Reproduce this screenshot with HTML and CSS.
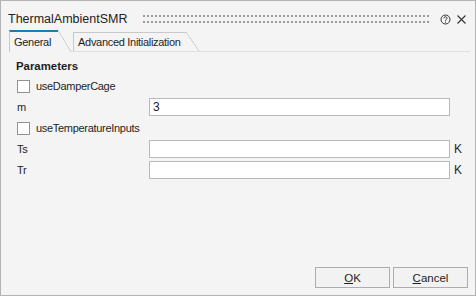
FILE: index.html
```html
<!DOCTYPE html>
<html>

<head>
  <title>ThermalAmbientSMR</title>
  <link rel="stylesheet" href="styles.css">
</head>

<body>
  <div class="window">
    <div class="titlebar">
      <span class="title">ThermalAmbientSMR</span>
      <div class="grip"></div>
      <svg class="help-icon" width="11" height="11" viewBox="0 0 11 11">
        <circle cx="5.5" cy="5.5" r="4.5" fill="none" stroke="#333" stroke-width="1" />
        <path d="M4 4.3 A1.5 1.5 0 1 1 6.3 5.5 C5.6 5.9 5.5 6.2 5.5 6.9" fill="none" stroke="#333" stroke-width="1" />
        <rect x="5" y="7.6" width="1" height="1" fill="#333" />
      </svg>
      <svg class="close-icon" width="9" height="9" viewBox="0 0 9 9">
        <path d="M0.5 0.5 L8.5 8.5 M8.5 0.5 L0.5 8.5" stroke="#333" stroke-width="1.1" />
      </svg>
    </div>

    <div class="tabs">
      <div class="tab active"><span class="tab-label">General</span></div>
      <div class="tab"><span class="tab-label">Advanced Initialization</span></div>
    </div>

    <div class="content">
      <div class="section-title">Parameters</div>
      <div class="form">
        <label class="check-row"><span class="checkbox"></span>useDamperCage</label>

        <span class="field-label">m</span>
        <input class="field" type="text" value="3">
        <span class="unit"></span>

        <label class="check-row"><span class="checkbox"></span>useTemperatureInputs</label>

        <span class="field-label">Ts</span>
        <input class="field" type="text" value="">
        <span class="unit">K</span>

        <span class="field-label">Tr</span>
        <input class="field" type="text" value="">
        <span class="unit">K</span>
      </div>
    </div>

    <div class="footer">
      <button><u>O</u>K</button>
      <button><u>C</u>ancel</button>
    </div>
  </div>
</body>

</html>
```

FILE: styles.css
```css
:root {
  --bg: #f4f4f4;
  --border: #b9b9b9;
  --text: #1e1e1e;
  --accent: #1d7bb5;
}

* {
  box-sizing: border-box;
  margin: 0;
  padding: 0;
}

body {
  font-family: 'Liberation Sans', Arial, sans-serif;
  font-size: 11px;
  letter-spacing: -0.3px;
  color: var(--text);
  background: var(--bg);
}

.window {
  width: 476px;
  height: 296px;
  border: 1px solid #b4b4b4;
  display: flex;
  flex-direction: column;
}

/* title bar */
.titlebar {
  display: flex;
  align-items: center;
  height: 18px;
  margin: 9px 0 2px;
  padding: 0 9px 0 7px;
}

.title {
  font-size: 12.5px;
  letter-spacing: 0;
  color: #222;
}

.grip {
  flex: 1;
  height: 8px;
  margin: 0 9px 0 16px;
  background-image:
    linear-gradient(to right, #9a9a9a 2px, transparent 2px),
    linear-gradient(to right, #9a9a9a 2px, transparent 2px);
  background-size: 4px 2px, 4px 2px;
  background-position: 0 0, 0 6px;
  background-repeat: repeat-x;
}

.help-icon {
  margin-right: 6px;
}

/* tabs */
.tabs {
  display: flex;
  align-items: flex-end;
  gap: 2px;
  margin: 0 5px 0 8px;
  height: 22px;
  border-bottom: 1px solid #e0e0e0;
}

.tab {
  display: flex;
  height: 19px;
  background: var(--bg);
}

.tab.active {
  height: 22px;
  margin-bottom: -1px;
}

.tab-label {
  display: flex;
  align-items: center;
  padding: 0 5px 0 4px;
  border-top: 1px solid #c8c8c8;
  border-left: 1px solid #c8c8c8;
}

.tab.active .tab-label {
  border-top: 2px solid var(--accent);
  padding: 0 7px 1px 4px;
}

.tab::after {
  content: '';
  width: 13px;
  background: linear-gradient(to top right, var(--bg) calc(50% - 0.6px), #c0c0c0 50%, transparent calc(50% + 0.6px));
}

/* parameters */
.content {
  flex: 1;
  padding: 7px 0 0 15px;
}

.section-title {
  font-weight: bold;
  font-size: 11.4px;
  letter-spacing: 0;
  height: 14px;
  line-height: 14px;
  margin-bottom: 4px;
}

.form {
  display: grid;
  grid-template-columns: 133px 301px auto;
  grid-auto-rows: 18px;
  row-gap: 3px;
  align-items: center;
}

.check-row {
  grid-column: 1 / -1;
  display: flex;
  align-items: center;
  gap: 6px;
}

.checkbox {
  width: 13px;
  height: 13px;
  margin-left: 1px;
  background: #fff;
  border: 1px solid #939393;
}

.field-label {
  padding-left: 1px;
}

.field {
  height: 18px;
  border: 1px solid var(--border);
  background: #fff;
  font-family: inherit;
  font-size: 12px;
  color: var(--text);
  padding: 0 3px;
  outline: none;
}

.unit {
  padding-left: 4px;
  font-size: 12px;
}

/* buttons */
.footer {
  display: flex;
  justify-content: flex-end;
  gap: 3px;
  padding: 0 7px 7px 0;
}

button {
  width: 75px;
  height: 21px;
  background: #f2f2f2;
  border: 1px solid #adadad;
  font-family: inherit;
  font-size: 11.5px;
  letter-spacing: 0;
  color: var(--text);
}
```
